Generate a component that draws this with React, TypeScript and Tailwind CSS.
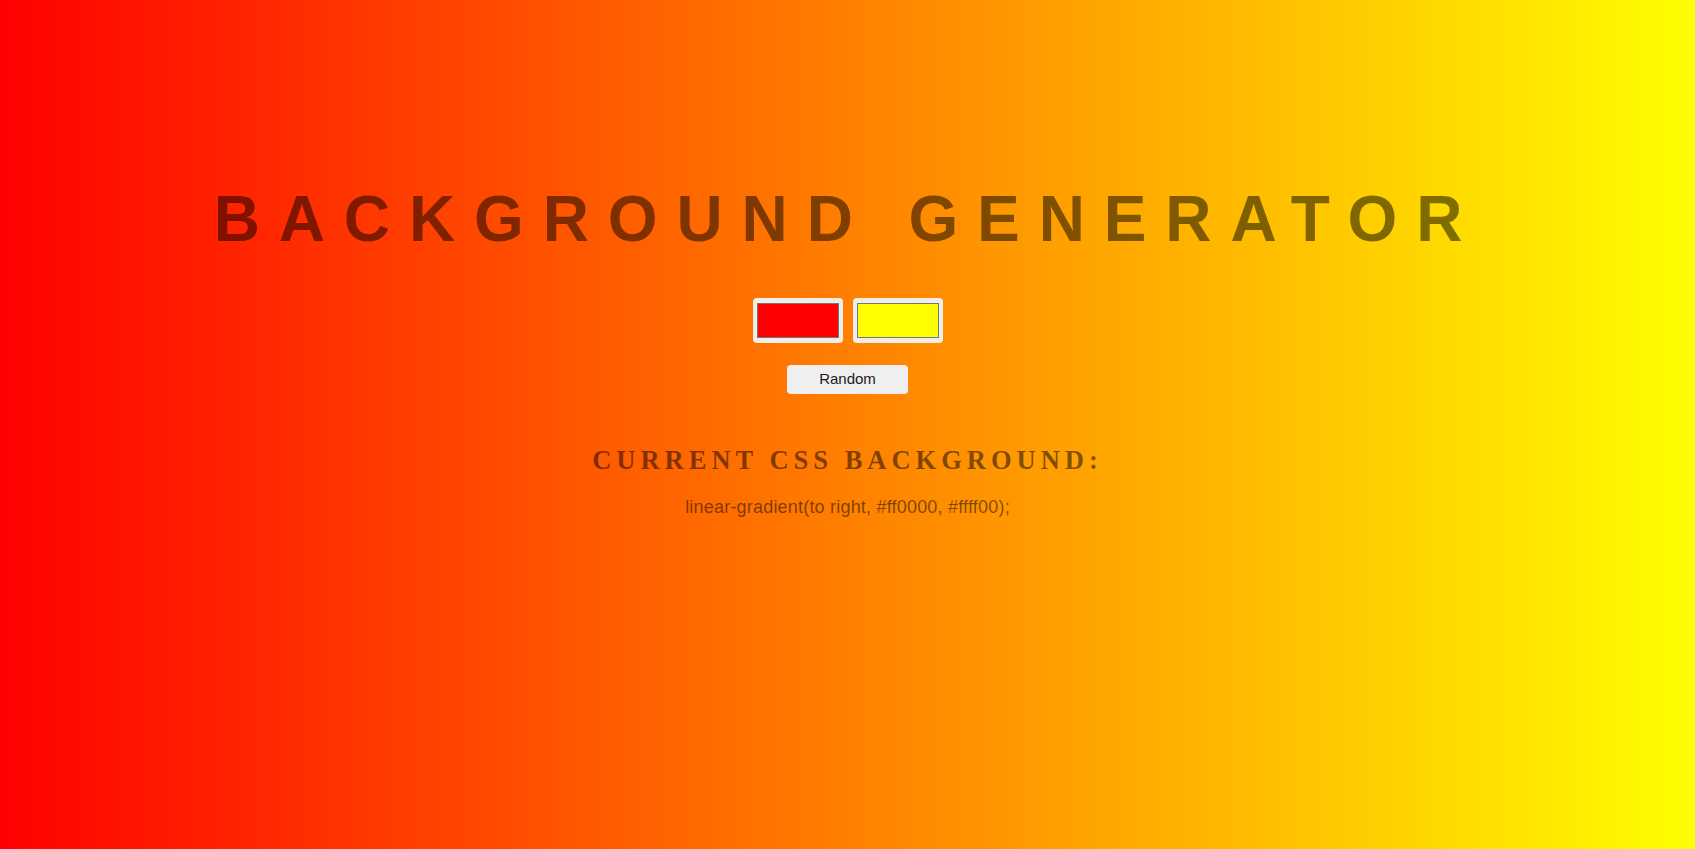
import React from "react";

const Swatch = ({ color }: { color: string }) => (
  <div className="w-[90px] h-[45px] rounded-[4px] bg-[#f1ede9] px-[4px] py-[5px]">
    <div className="w-full h-full border border-[#767676]" style={{ backgroundColor: color }} />
  </div>
);

export default function App() {
  return (
    <div className="min-h-screen w-full bg-linear-to-r/srgb from-[#ff0000] to-[#ffff00] flex flex-col items-center text-center font-['Liberation_Sans',Arial,sans-serif]">
      <h1 className="pt-[182px] text-[64px] leading-[74px] font-bold tracking-[0.295em] text-black/50">
        BACKGROUND GENERATOR
      </h1>
      <div className="mt-[42px] flex gap-[10px]">
        <Swatch color="#ff0000" />
        <Swatch color="#ffff00" />
      </div>
      <button className="mt-[22px] w-[121px] h-[29px] rounded-[4px] bg-[#efefef] text-[15px] text-[#1a1a1a]">
        Random
      </button>
      <h3 className="mt-[51px] text-[26.5px] leading-[30px] font-bold tracking-[5px] text-black/50 font-['Liberation_Serif','Times_New_Roman',serif]">
        CURRENT CSS BACKGROUND:
      </h3>
      <p className="mt-[22px] text-[18px] leading-[21px] tracking-[0.2px] text-black/50">
        linear-gradient(to right, #ff0000, #ffff00);
      </p>
    </div>
  );
}
